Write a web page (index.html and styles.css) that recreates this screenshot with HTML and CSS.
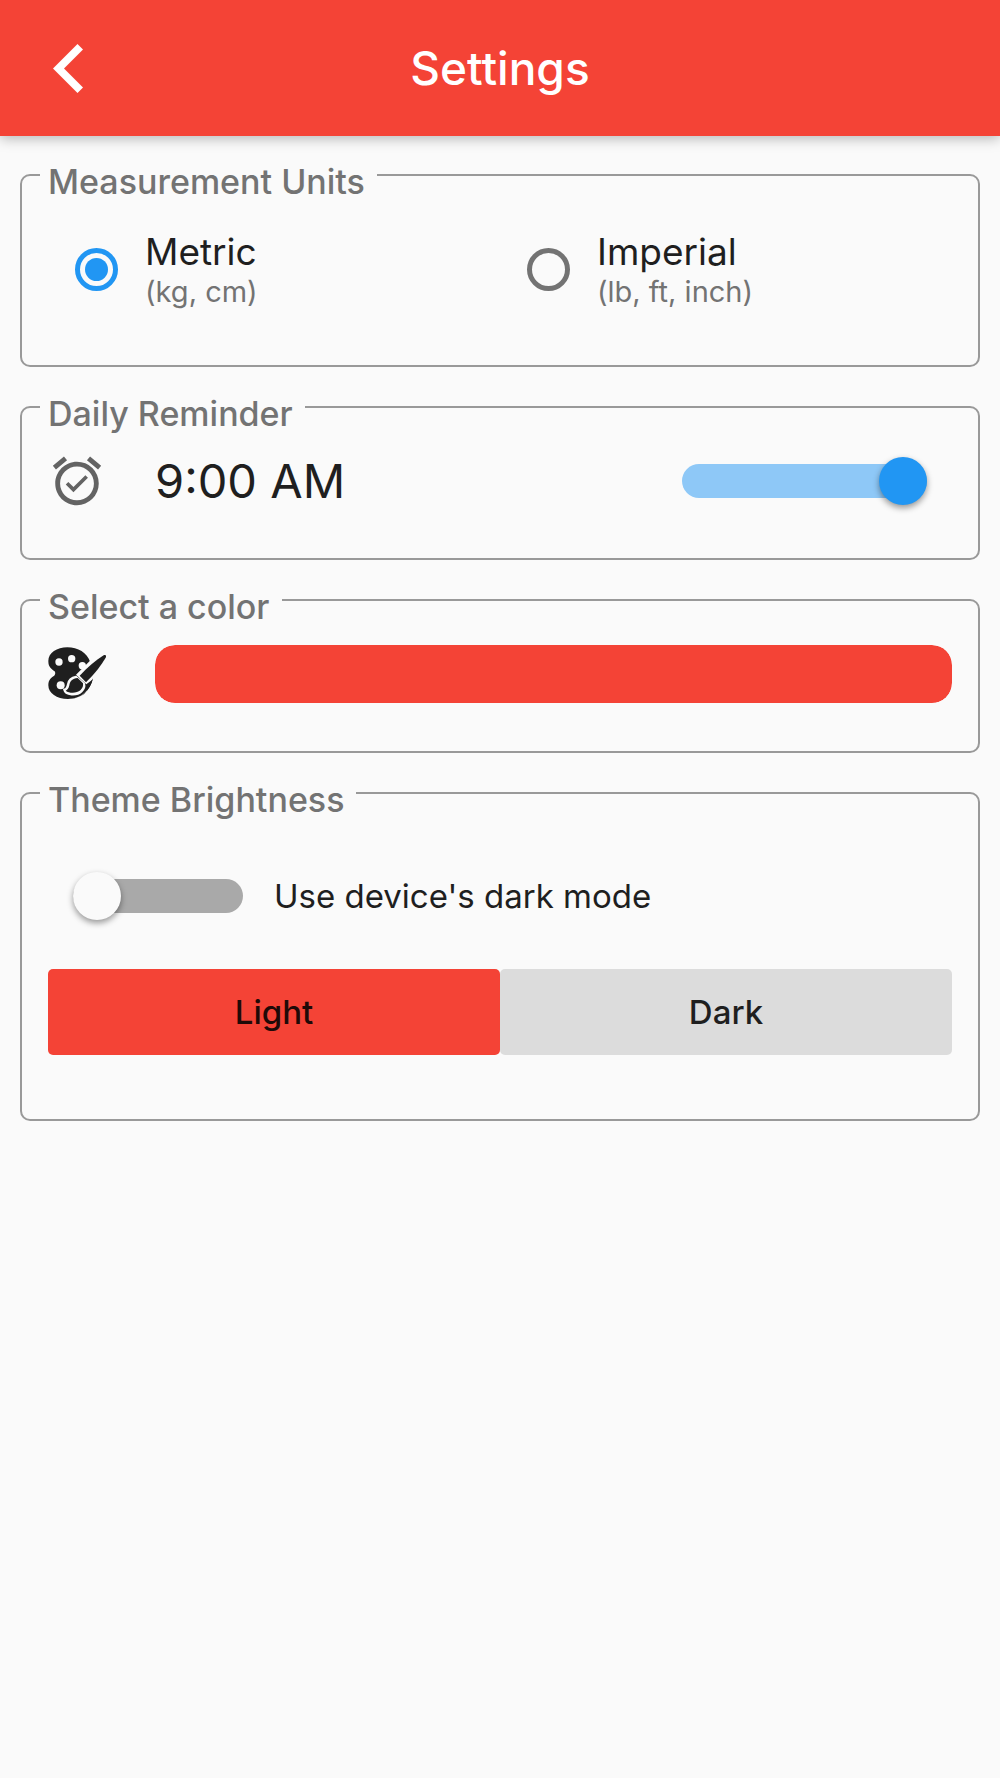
FILE: index.html
```html
<!DOCTYPE html>
<html lang="en">
<head>
  <meta charset="utf-8">
  <meta name="viewport" content="width=device-width, initial-scale=1">
  <title>Settings</title>
  <link rel="stylesheet" href="styles.css">
</head>
<body>
  <header class="app-bar">
    <button class="back" type="button" aria-label="Back">
      <svg class="back-icon" viewBox="0 0 30 49" aria-hidden="true"><path d="M24.5 0 30 5.6 11 24.5 30 43.4 24.5 49 0 24.5z"/></svg>
    </button>
    <h1 class="title">Settings</h1>
  </header>

  <main class="settings">
    <fieldset class="group group-units">
      <legend class="group-label">Measurement Units</legend>
      <div class="units">
        <label class="unit">
          <input class="radio" type="radio" name="units" checked>
          <span class="unit-text">
            <span class="unit-name">Metric</span>
            <span class="unit-detail">(kg, cm)</span>
          </span>
        </label>
        <label class="unit">
          <input class="radio" type="radio" name="units">
          <span class="unit-text">
            <span class="unit-name">Imperial</span>
            <span class="unit-detail">(lb, ft, inch)</span>
          </span>
        </label>
      </div>
    </fieldset>

    <fieldset class="group">
      <legend class="group-label">Daily Reminder</legend>
      <div class="row">
        <svg class="icon icon-muted" viewBox="0 0 24 24" aria-hidden="true">
          <path d="M22 5.72l-4.6-3.86-1.29 1.53 4.6 3.86L22 5.72zM7.88 3.39L6.6 1.86 2 5.71l1.29 1.53 4.59-3.85zM12 4c-4.97 0-9 4.03-9 9s4.02 9 9 9a9 9 0 0 0 0-18zm0 16c-3.87 0-7-3.13-7-7s3.13-7 7-7 7 3.13 7 7-3.13 7-7 7zm-1.46-5.47L8.41 12.4l-1.06 1.06 3.18 3.18 6-6-1.06-1.06-4.93 4.95z"/>
        </svg>
        <button class="time" type="button">9:00 AM</button>
        <input class="switch switch-wide" type="checkbox" role="switch" aria-label="Daily Reminder" checked>
      </div>
    </fieldset>

    <fieldset class="group">
      <legend class="group-label">Select a color</legend>
      <div class="row">
        <svg class="icon" viewBox="24 30 174 174" aria-hidden="true">
          <path d="M25 78C25 53 51 37 82 37C114 37 141 53 151 82L159 130C151 167 122 192 84 192C50 192 25 175 25 151C25 133 34 129 44 121Q49 116 44 109C34 101 25 97 25 78z"/>
          <g class="cutout">
            <circle cx="57" cy="81" r="11"/>
            <circle cx="95" cy="71" r="11"/>
            <circle cx="127" cy="92" r="11"/>
            <circle cx="62" cy="151" r="12"/>
            <path d="M150 77L162 70 178 118 157 134 139 148 108 119z"/>
            <path class="outline" d="M108 126C92 128 86 137 84 149C82 160 78 163 73 164C76 181 111 182 124 169C132 161 134 153 132 147z"/>
          </g>
          <path d="M191 61C197 58 200 62 197 68C184 91 164 116 138 142L119 122C143 97 168 75 191 61z"/>
          <path d="M113 129C97 130 90 139 88 151C86 161 81 165 77 167C88 176 111 175 121 166C128 159 130 153 129 145z"/>
          <path d="M159 130C151 167 122 192 92 191C116 188 132 181 140 168L145 153z"/>
        </svg>
        <input class="swatch" type="color" value="#f44336" aria-label="Select a color">
      </div>
    </fieldset>

    <fieldset class="group group-theme">
      <legend class="group-label">Theme Brightness</legend>
      <label class="device-mode">
        <input class="switch" type="checkbox" role="switch">
        <span>Use device's dark mode</span>
      </label>
      <div class="modes">
        <button class="mode mode-selected" type="button" aria-pressed="true">Light</button>
        <button class="mode" type="button" aria-pressed="false">Dark</button>
      </div>
    </fieldset>
  </main>
</body>
</html>
```
FILE: styles.css
```css
:root {
  --primary: #f44336;
  --accent: #2196f3;
  --accent-soft: #8ec8f7;
  --surface: #fafafa;
  --text: #1f1f1f;
  --muted: #737373;
}

* {
  box-sizing: border-box;
}

body {
  margin: 0;
  background: var(--surface);
  color: var(--text);
  font-family: Inter, "Liberation Sans", sans-serif;
}

button,
input {
  margin: 0;
  padding: 0;
  border: 0;
  background: none;
  color: inherit;
  font: inherit;
}

/* App bar */
.app-bar {
  display: grid;
  grid-template-columns: 1fr auto 1fr;
  align-items: center;
  padding: 38px 53px;
  background: var(--primary);
  color: #fff;
  box-shadow: 0 3px 12px rgba(0, 0, 0, 0.26);
}

.back {
  display: flex;
  justify-self: start;
}

.back-icon {
  width: 30px;
  height: 49px;
  fill: currentColor;
}

.title {
  margin: 0;
  font-size: 46px;
  font-weight: 500;
  line-height: 60px;
}

/* Outlined groups */
.settings {
  display: grid;
  gap: 15px;
  padding: 14px 20px;
}

.group {
  min-width: 0;
  margin: 0;
  padding: 20px 26px 48px;
  border: 2px solid #999;
  border-radius: 10px;
}

.group-label {
  margin-left: -8px;
  padding: 14px 12px 0 8px;
  color: var(--muted);
  font-size: 34px;
  font-weight: 500;
  line-height: 36px;
}

.row {
  display: flex;
  align-items: center;
  gap: 49px;
  min-height: 58px;
}

.icon {
  flex: none;
  width: 58px;
  height: 58px;
  fill: var(--text);
}

.icon-muted {
  fill: #636363;
}

.cutout {
  fill: var(--surface);
}

.outline {
  stroke: var(--surface);
  stroke-width: 7;
}

/* Measurement units */
.group-units {
  padding-top: 29px;
  padding-bottom: 56px;
}

.units {
  display: grid;
  grid-template-columns: 1fr 1fr;
}

.unit {
  display: flex;
  align-items: center;
  gap: 27px;
  padding-left: 27px;
}

.radio {
  appearance: none;
  display: grid;
  place-items: center;
  width: 43px;
  height: 43px;
  border: 5px solid var(--muted);
  border-radius: 50%;
}

.radio:checked {
  border-color: var(--accent);
}

.radio:checked::before {
  content: "";
  width: 23px;
  height: 23px;
  border-radius: 50%;
  background: var(--accent);
}

.unit-text {
  display: grid;
}

.unit-name {
  font-size: 37px;
  line-height: 46px;
}

.unit-detail {
  color: var(--muted);
  font-size: 29px;
  line-height: 34px;
}

/* Reminder and colour */
.time {
  font-size: 47px;
  line-height: 58px;
}

.switch {
  appearance: none;
  display: flex;
  align-items: center;
  width: 170px;
  height: 34px;
  border-radius: 17px;
  background: #a9a9a9;
}

.switch::before {
  content: "";
  flex: none;
  width: 48px;
  height: 48px;
  border-radius: 50%;
  background: var(--surface);
  box-shadow: 0 3px 6px rgba(0, 0, 0, 0.4);
}

.switch:checked {
  justify-content: flex-end;
  background: var(--accent-soft);
}

.switch:checked::before {
  background: var(--accent);
}

.switch-wide {
  width: 245px;
  margin-left: auto;
  margin-right: 25px;
}

.swatch {
  appearance: none;
  flex: 1;
  min-width: 0;
  height: 58px;
  border-radius: 20px;
  overflow: hidden;
}

.swatch::-webkit-color-swatch-wrapper {
  padding: 0;
}

.swatch::-webkit-color-swatch {
  border: 0;
  border-radius: 20px;
}

/* Theme brightness */
.group-theme {
  padding-top: 54px;
  padding-bottom: 64px;
}

.device-mode {
  display: flex;
  align-items: center;
  gap: 31px;
  min-height: 48px;
  margin-bottom: 49px;
  padding-left: 25px;
  font-size: 33px;
  line-height: 48px;
}

.modes {
  display: grid;
  grid-template-columns: 1fr 1fr;
}

.mode {
  padding: 19px;
  border-radius: 5px;
  background: #dcdcdc;
  font-size: 33px;
  font-weight: 500;
  line-height: 48px;
}

.mode-selected {
  background: var(--primary);
  color: #1f0a08;
}
```
